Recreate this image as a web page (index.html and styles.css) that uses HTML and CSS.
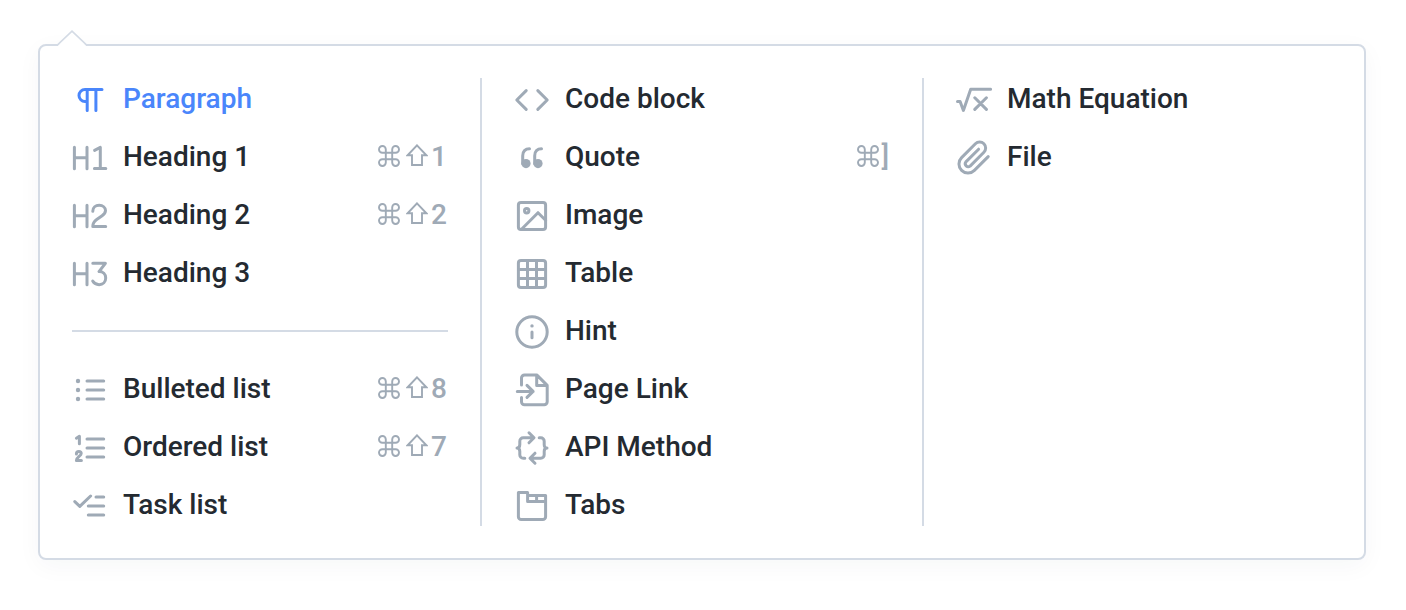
FILE: index.html
```html
<!DOCTYPE html>
<html lang="en">
<head>
<meta charset="utf-8">
<title>Insert block</title>
<link rel="stylesheet" href="styles.css">
</head>
<body>
<svg class="defs" width="0" height="0">
  <symbol id="cmd" viewBox="0 0 22 22"><path d="M7.8 7.8h6.4v6.4H7.8zM7.8 7.8H4.4a3.4 3.4 0 1 1 3.4-3.4zM14.2 7.8V4.4a3.4 3.4 0 1 1 3.4 3.4zM14.2 14.2h3.4a3.4 3.4 0 1 1-3.4 3.4zM7.8 14.2v3.4a3.4 3.4 0 1 1-3.4-3.4z"/></symbol>
  <symbol id="shift" viewBox="0 0 22 22"><path d="M11 1.3L20.4 11.3H16V21H6v-9.7H1.6z"/></symbol>
</svg>
<div class="menu">
  <svg class="pointer" viewBox="0 0 30 16"><path class="pointer-fill" d="M1 15.5L15 1.5L29 15.5V16H1z"/><path class="pointer-line" d="M.5 15L15 1.2L29.5 15"/></svg>
  <div class="column">
    <div class="item active"><svg class="icon" viewBox="0 0 36 36"><path d="M30 7.5H13a6 6 0 0 0 0 12h2M15.2 7.5v21M23.9 7.5v21"/></svg><span class="label">Paragraph</span></div>
    <div class="item"><svg class="icon" viewBox="0 0 36 36"><path d="M2.4 7.3v21.4M15 7.3v21.4M2.4 17.8H15M22.6 10.4l5.7-3v21.2M22.4 28.6h11.4"/></svg><span class="label">Heading 1</span><span class="keys"><svg class="key"><use href="#cmd"/></svg><svg class="key shift"><use href="#shift"/></svg><span>1</span></span></div>
    <div class="item"><svg class="icon" viewBox="0 0 36 36"><path d="M2.4 7.3v21.4M15 7.3v21.4M2.4 17.8H15M20.8 13.2c0-3.6 2.8-5.9 6.4-5.9s6.3 2.2 6.3 5.3c0 2.2-1.3 3.7-3.4 5.2l-5.4 3.8c-2.4 1.7-3.9 3.6-3.9 7h12.9"/></svg><span class="label">Heading 2</span><span class="keys"><svg class="key"><use href="#cmd"/></svg><svg class="key shift"><use href="#shift"/></svg><span>2</span></span></div>
    <div class="item"><svg class="icon" viewBox="0 0 36 36"><path d="M2.4 7.3v21.4M15 7.3v21.4M2.4 17.8H15M20.8 7.3h12.6L27 15.6c4 0 6.7 2.6 6.7 6.4 0 3.9-2.7 6.7-6.6 6.7-2.8 0-5-1.2-6.4-3.6"/></svg><span class="label">Heading 3</span></div>
    <div class="separator"></div>
    <div class="item"><svg class="icon" viewBox="0 0 36 36"><path d="M15 9h16.7M15 18h16.7M15 27h16.7"/><g class="solid"><circle cx="6" cy="9" r="2.2"/><circle cx="6" cy="18" r="2.2"/><circle cx="6" cy="27" r="2.2"/></g></svg><span class="label">Bulleted list</span><span class="keys"><svg class="key"><use href="#cmd"/></svg><svg class="key shift"><use href="#shift"/></svg><span>8</span></span></div>
    <div class="item"><svg class="icon" viewBox="0 0 36 36"><path d="M15 9h16.7M15 18h16.7M15 27h16.7"/><path d="M4.4 8.2l3-1.9v7.4M4.4 24c0-1.7 1.1-2.6 2.5-2.6 1.5 0 2.3.8 2.3 2 0 2.6-4.8 3.6-4.8 7.1h5"/></svg><span class="label">Ordered list</span><span class="keys"><svg class="key"><use href="#cmd"/></svg><svg class="key shift"><use href="#shift"/></svg><span>7</span></span></div>
    <div class="item"><svg class="icon" viewBox="0 0 36 36"><path d="M2.8 13.6l5 4.8L18.6 8M24 9h7.7M16.3 18h15.4M16.3 27h15.4"/></svg><span class="label">Task list</span></div>
  </div>
  <div class="column">
    <div class="item"><svg class="icon" viewBox="0 0 36 36"><path d="M12.2 8.6L2.8 18l9.4 9.4M23.8 8.6l9.4 9.4-9.4 9.4"/></svg><span class="label">Code block</span></div>
    <div class="item"><svg class="icon" viewBox="0 0 36 36"><path d="M15.5 8.7c-4.3 0-6.8 2.7-6.8 7v8M27.5 8.7c-4.3 0-6.8 2.7-6.8 7v8"/><g class="solid"><circle cx="12" cy="23.6" r="4.6"/><circle cx="24" cy="23.6" r="4.6"/></g></svg><span class="label">Quote</span><span class="keys"><svg class="key last"><use href="#cmd"/></svg><span>]</span></span></div>
    <div class="item"><svg class="icon" viewBox="0 0 36 36"><rect x="4.4" y="4.4" width="27.2" height="27.2" rx="2.6"/><circle cx="12.7" cy="12.7" r="2.2"/><path d="M7.5 31.2L24 14.7l7.6 7.6"/></svg><span class="label">Image</span></div>
    <div class="item"><svg class="icon" viewBox="0 0 36 36"><rect x="4.4" y="4.4" width="27.2" height="27.2" rx="2.6"/><path d="M13.5 4.5v27M22.5 4.5v27M4.5 13.5h27M4.5 22.5h27"/></svg><span class="label">Table</span></div>
    <div class="item"><svg class="icon" viewBox="0 0 36 36"><circle cx="18" cy="18" r="15.2"/><path d="M18 18v5.8"/><circle class="solid" cx="18" cy="11.9" r="1.7"/></svg><span class="label">Hint</span></div>
    <div class="item"><svg class="icon" viewBox="0 0 36 36"><path d="M7.5 13V5.9a3 3 0 0 1 3-3h12.2l10.5 10.5v16.4a3 3 0 0 1-3 3H10.5a3 3 0 0 1-3-3v-4.3M22.7 3v10.4h10.4M3.3 19.4h15.8M13 13.4l6.1 6-6.1 6"/></svg><span class="label">Page Link</span></div>
    <div class="item"><svg class="icon" viewBox="0 0 36 36"><path d="M15 2.8l5 5-5 5M19.5 7.8H9.2a3.4 3.4 0 0 0-3.4 3.4v3.4c0 2-.9 3.4-2.8 3.4 1.9 0 2.8 1.4 2.8 3.4v3.4a3.4 3.4 0 0 0 3.4 3.4h1.6M21 23.2l-5 5 5 5M16.5 28.2h10.3a3.4 3.4 0 0 0 3.4-3.4v-3.4c0-2 .9-3.4 2.8-3.4-1.9 0-2.8-1.4-2.8-3.4v-3.4a3.4 3.4 0 0 0-3.4-3.4h-1.6"/></svg><span class="label">API Method</span></div>
    <div class="item"><svg class="icon" viewBox="0 0 36 36"><path d="M4.4 4.4h9.2v9.2h18M13.6 7.4h18v21.4a2.8 2.8 0 0 1-2.8 2.8H7.2a2.8 2.8 0 0 1-2.8-2.8V4.4M22.6 7.4v6.2"/></svg><span class="label">Tabs</span></div>
  </div>
  <div class="column">
    <div class="item"><svg class="icon" viewBox="0 0 36 36"><path d="M1.5 19.4h2.6l3.3 9L14.7 7.3h19.9M18.8 15.8l11.6 11.6M30.4 15.8L18.8 27.4"/></svg><span class="label">Math Equation</span></div>
    <div class="item"><svg class="icon" viewBox="0 0 36 36"><path d="M32.2 16.6L18.4 30.4A9 9 0 0 1 5.6 17.6L19.4 3.8a6 6 0 0 1 8.5 8.5L14.1 26.1a3 3 0 0 1-4.2-4.2L22.6 9.2"/></svg><span class="label">File</span></div>
  </div>
</div>
</body>
</html>
```
FILE: styles.css
```css
* { box-sizing: border-box; }
body {
  margin: 0;
  padding: 44px 40px 50px 38px;
  background: #fff;
  font-family: Roboto, "Liberation Sans", sans-serif;
  font-size: 28px;
  font-weight: 500;
  color: #242a31;
}
.defs { display: none; }
.menu {
  position: relative;
  display: grid;
  grid-template-columns: 442px 442px 1fr;
  height: 516px;
  padding: 32px 0;
  border: 2px solid #d4dbe5;
  border-radius: 8px;
  background: #fff;
  box-shadow: 0 6px 24px rgba(24, 48, 85, 0.04);
}
.pointer {
  position: absolute;
  left: 17px;
  top: -16px;
  width: 30px;
  height: 16px;
}
.pointer-fill { fill: #fff; }
.pointer-line { fill: none; stroke: #d4dbe5; stroke-width: 1.6; }
.column {
  display: flex;
  flex-direction: column;
  gap: 16px;
  padding: 0 32px;
  border-right: 2px solid #d4dbe5;
}
.column:last-child { border-right: 0; }
.item {
  display: flex;
  align-items: center;
  height: 42px;
  line-height: 42px;
  white-space: nowrap;
}
.icon {
  flex: none;
  width: 36px;
  height: 36px;
  margin: 2px 15px 0 0;
  fill: none;
  stroke: #9faab6;
  stroke-width: 3;
  stroke-linecap: round;
  stroke-linejoin: round;
}
.icon .solid { fill: #9faab6; stroke: none; }
.active { color: #4a86fb; }
.active .icon { stroke: #4a86fb; }
.label, .keys span { margin-top: -1px; }
.keys {
  display: flex;
  align-items: center;
  margin-left: auto;
  padding-right: 1px;
  color: #9faab6;
}
.key {
  width: 22px;
  height: 22px;
  margin: -3px 6px 0 0;
  fill: none;
  stroke: #9faab6;
  stroke-width: 1.9;
}
.key.shift { margin: -4px 3px 0 0; }
.key.last { margin-right: 2px; }
.separator {
  height: 2px;
  margin: 20px 0;
  background: #d4dbe5;
}
```
